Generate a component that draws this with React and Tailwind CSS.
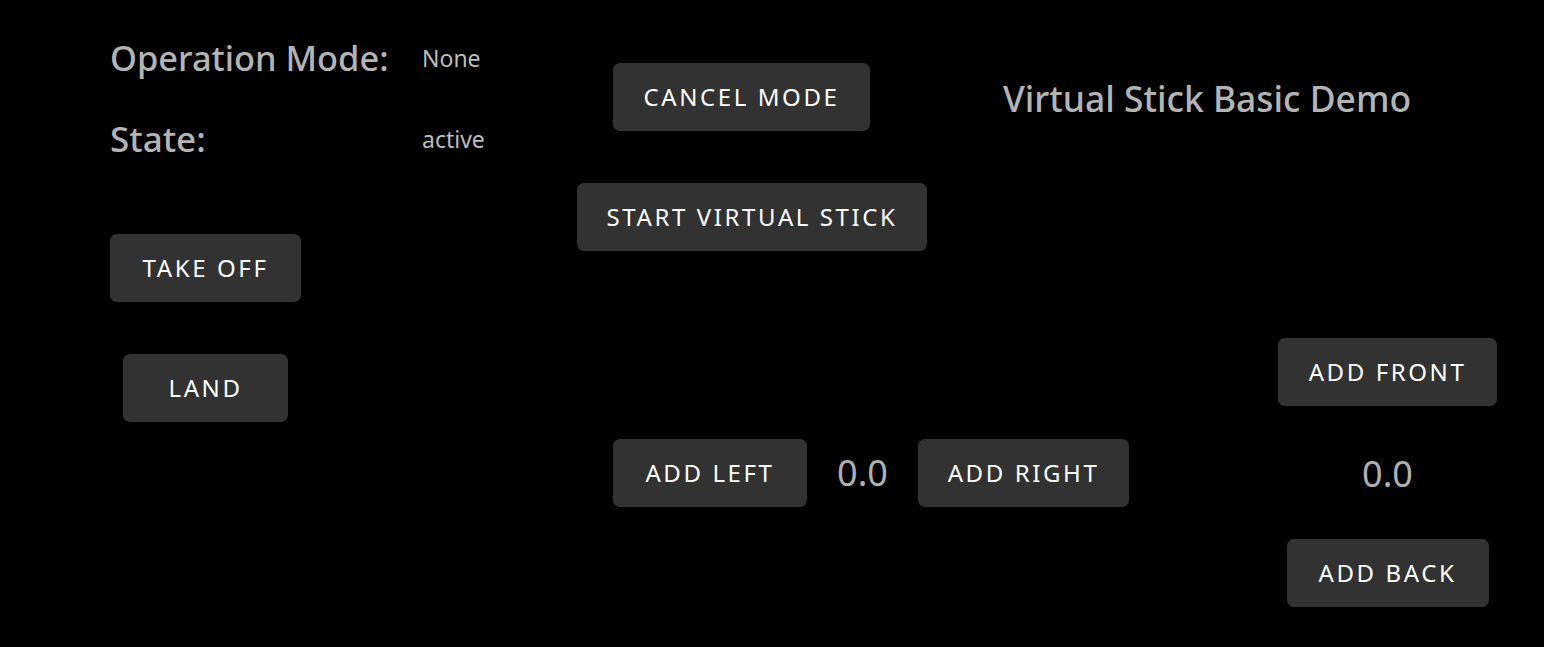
import React from "react";

const font = { fontFamily: '"Noto Sans", "Open Sans", sans-serif' };

function Btn({ children, w, className = "" }) {
  return (
    <div
      className={`flex h-[68px] items-center justify-center rounded-[7px] bg-[#323232] text-[24px] leading-none tracking-[2.6px] text-white ${w} ${className}`}
    >
      {children}
    </div>
  );
}

export default function App() {
  return (
    <div className="h-[647px] w-[1544px] overflow-hidden bg-black" style={font}>
      <div className="flex">
        {/* Left column */}
        <div className="ml-[110px] flex w-[467px] flex-col">
          <div className="mt-[36px] flex h-[44px] items-center">
            <div className="w-[312px] text-[34.4px] font-medium leading-[44px] text-[#b4b4b4]">Operation Mode:</div>
            <div className="text-[23px] leading-[44px] text-[#bdbdbd]">None</div>
          </div>
          <div className="mt-[37px] flex h-[44px] items-center">
            <div className="w-[312px] text-[35px] font-medium leading-[44px] text-[#b4b4b4]">State:</div>
            <div className="text-[23px] leading-[44px] text-[#bdbdbd]">active</div>
          </div>
          <div className="mt-[73px] flex w-[191px] flex-col items-center">
            <Btn w="w-[191px]">TAKE OFF</Btn>
            <Btn w="w-[165px]" className="mt-[52px]">LAND</Btn>
          </div>
        </div>

        {/* Middle column */}
        <div className="flex w-[426px] flex-col">
          <Btn w="w-[257px]" className="ml-[36px] mt-[63px]">CANCEL MODE</Btn>
          <Btn w="w-[350px]" className="mt-[52px]">START VIRTUAL STICK</Btn>
          <div className="ml-[36px] mt-[188px] flex items-center">
            <Btn w="w-[194px]" className="shrink-0">ADD LEFT</Btn>
            <div className="w-[111px] shrink-0 text-center text-[36px] leading-none text-[#b0b0b0]">0.0</div>
            <Btn w="w-[211px]" className="shrink-0">ADD RIGHT</Btn>
          </div>
        </div>

        {/* Right column */}
        <div className="flex flex-col">
          <div className="mt-[76px] h-[44px] whitespace-nowrap text-[35.4px] font-medium leading-[44px] text-[#b4b4b4]">
            Virtual Stick Basic Demo
          </div>
          <div className="ml-[275px] mt-[218px] flex w-[219px] flex-col items-center">
            <Btn w="w-[219px]">ADD FRONT</Btn>
            <div className="mt-[48px] h-[40px] text-[36px] leading-[40px] text-[#b0b0b0]">0.0</div>
            <Btn w="w-[202px]" className="mt-[45px]">ADD BACK</Btn>
          </div>
        </div>
      </div>
    </div>
  );
}
